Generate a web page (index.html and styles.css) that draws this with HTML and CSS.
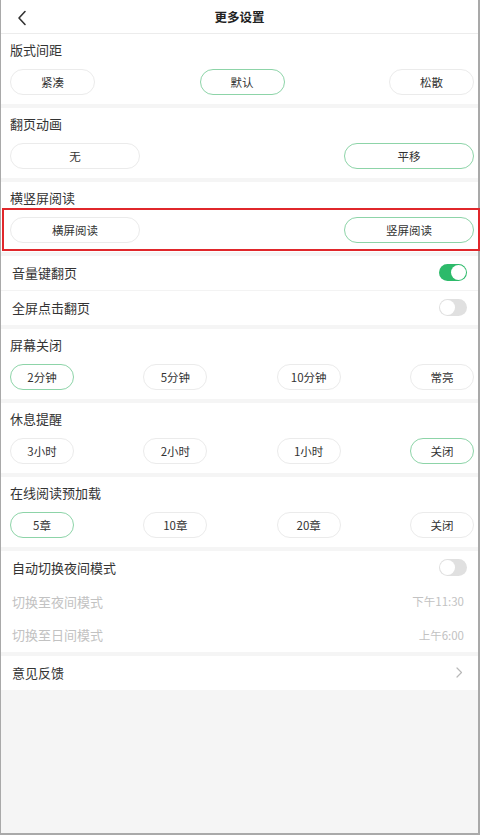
FILE: index.html
```html
<!DOCTYPE html>
<html lang="zh-CN">
<head>
<meta charset="utf-8">
<title>更多设置</title>
<link rel="stylesheet" href="styles.css">
</head>
<body>
<div class="frame">
  <header class="topbar">
    <svg class="back" width="10" height="16" viewBox="0 0 10 16"><path d="M8 1.5 L2 8 L8 14.5" fill="none" stroke="#333" stroke-width="1.6" stroke-linecap="round" stroke-linejoin="round"/></svg>
    <h1 class="title">更多设置</h1>
  </header>

  <section class="group">
    <div class="group-title">版式间距</div>
    <div class="opts">
      <span class="opt w3">紧凑</span>
      <span class="opt w3 on">默认</span>
      <span class="opt w3">松散</span>
    </div>
  </section>

  <section class="group">
    <div class="group-title">翻页动画</div>
    <div class="opts">
      <span class="opt w2">无</span>
      <span class="opt w2 on">平移</span>
    </div>
  </section>

  <section class="group marked">
    <div class="group-title">横竖屏阅读</div>
    <div class="opts">
      <span class="opt w2">横屏阅读</span>
      <span class="opt w2 on">竖屏阅读</span>
    </div>
    <div class="mark"></div>
  </section>

  <section class="list">
    <div class="row line"><span class="label">音量键翻页</span><span class="switch on"></span></div>
    <div class="row"><span class="label">全屏点击翻页</span><span class="switch"></span></div>
  </section>

  <section class="group">
    <div class="group-title">屏幕关闭</div>
    <div class="opts">
      <span class="opt w4 on">2分钟</span>
      <span class="opt w4">5分钟</span>
      <span class="opt w4">10分钟</span>
      <span class="opt w4">常亮</span>
    </div>
  </section>

  <section class="group">
    <div class="group-title">休息提醒</div>
    <div class="opts">
      <span class="opt w4">3小时</span>
      <span class="opt w4">2小时</span>
      <span class="opt w4">1小时</span>
      <span class="opt w4 on">关闭</span>
    </div>
  </section>

  <section class="group">
    <div class="group-title">在线阅读预加载</div>
    <div class="opts">
      <span class="opt w4 on">5章</span>
      <span class="opt w4">10章</span>
      <span class="opt w4">20章</span>
      <span class="opt w4">关闭</span>
    </div>
  </section>

  <section class="list">
    <div class="row"><span class="label">自动切换夜间模式</span><span class="switch"></span></div>
    <div class="row dim"><span class="label">切换至夜间模式</span><span class="value">下午11:30</span></div>
    <div class="row dim short"><span class="label">切换至日间模式</span><span class="value">上午6:00</span></div>
  </section>

  <section class="list">
    <div class="row"><span class="label">意见反馈</span>
      <svg class="chev" width="7" height="11" viewBox="0 0 7 11"><path d="M1 1 L5.5 5.5 L1 10" fill="none" stroke="#b8b8b8" stroke-width="1.2" stroke-linecap="round" stroke-linejoin="round"/></svg>
    </div>
  </section>
</div>
</body>
</html>
```

FILE: styles.css
```css
* { box-sizing: border-box; margin: 0; padding: 0; }
html, body { width: 480px; height: 835px; overflow: hidden; }
body {
  background: #f5f5f5;
  font-family: "Noto Sans CJK SC", "Noto Sans", sans-serif;
  color: #333;
}
.frame {
  width: 480px;
  height: 835px;
  border-left: 1px solid #a9a9a9;
  border-right: 2px solid #a9a9a9;
  border-bottom: 2px solid #a9a9a9;
  background: #f5f5f5;
  display: flex;
  flex-direction: column;
  gap: 4px;
}
.topbar {
  height: 34px;
  background: #fff;
  border-bottom: 1px solid #ececec;
  display: flex;
  align-items: center;
  justify-content: center;
  position: relative;
  margin-bottom: -4px;
}
.back { position: absolute; left: 16px; top: 10px; }
.title { font-size: 12.5px; font-weight: bold; color: #222; line-height: 20px; }

.group {
  background: #fff;
  height: 70px;
  padding: 6px 4px 0 9px;
  position: relative;
}
.group-title {
  font-size: 13px;
  line-height: 20px;
  color: #333;
}
.opts {
  margin-top: 9px;
  display: flex;
  justify-content: space-between;
}
.opt {
  height: 26px;
  border: 1px solid #ebebeb;
  border-radius: 13px;
  font-size: 11.5px;
  color: #333;
  display: flex;
  align-items: center;
  justify-content: center;
}
.opt.on { border-color: #8dd4a8; }
.w2 { width: 130px; }
.w3 { width: 85px; }
.w4 { width: 64px; }

.mark {
  position: absolute;
  left: 1px;
  right: -2px;
  top: 26px;
  height: 43px;
  border: 2px solid #e0272b;
}

.list { background: #fff; }
.row {
  height: 34px;
  padding: 0 11px 2px 11px;
  display: flex;
  align-items: center;
  justify-content: space-between;
  font-size: 13px;
}
.row.line { border-bottom: 1px solid #f3f3f3; height: 35px; }
.row.short { height: 33px; }
.row.dim .label { color: #c2c2c2; }
.value { font-size: 11.5px; color: #c2c2c2; margin-right: 3px; }
.chev { margin-right: 4px; }

.switch {
  width: 28px;
  height: 17px;
  border-radius: 9px;
  background: #e0e0e0;
  position: relative;
}
.switch::after {
  content: "";
  position: absolute;
  left: 1px;
  top: 1px;
  width: 15px;
  height: 15px;
  border-radius: 50%;
  background: #fff;
}
.switch.on { background: #2dba6a; }
.switch.on::after { left: 12px; }
```
